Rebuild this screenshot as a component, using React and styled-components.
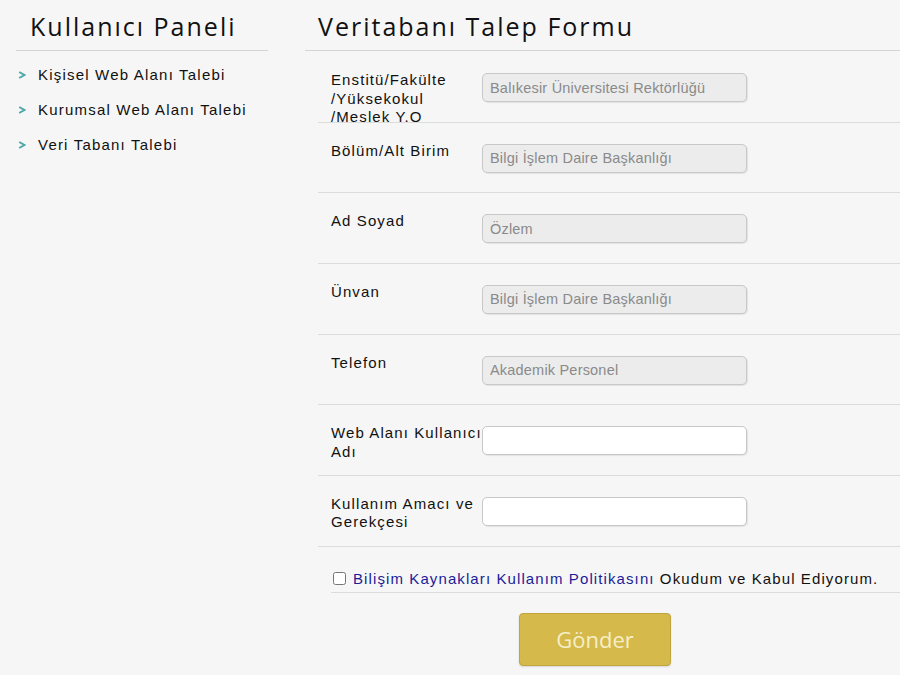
import React from "react";
import styled, { createGlobalStyle } from "styled-components";

const GlobalStyle = createGlobalStyle`
  body {
    margin: 0;
    background: #f6f6f6;
    font-family: "Liberation Sans", Arial, sans-serif;
    color: #111;
  }
`;

const menu = ["Kişisel Web Alanı Talebi", "Kurumsal Web Alanı Talebi", "Veri Tabanı Talebi"];

const fields = [
  { label: ["Enstitü/Fakülte", "/Yüksekokul", "/Meslek Y.O"], value: "Balıkesir Üniversitesi Rektörlüğü" },
  { label: ["Bölüm/Alt Birim"], value: "Bilgi İşlem Daire Başkanlığı" },
  { label: ["Ad Soyad"], value: "Özlem" },
  { label: ["Ünvan"], value: "Bilgi İşlem Daire Başkanlığı" },
  { label: ["Telefon"], value: "Akademik Personel" },
  { label: ["Web Alanı Kullanıcı", "Adı"], value: null },
  { label: ["Kullanım Amacı ve", "Gerekçesi"], value: null },
];

const App = () => {
  return (
    <>
      <GlobalStyle />
      <Page>
        <Sidebar>
          <Heading>Kullanıcı Paneli</Heading>
          <Menu>
            {menu.map((item) => (
              <MenuItem key={item}>
                <Arrow viewBox="0 0 8 8">
                  <path d="M1.2 1 L6.4 4 L1.2 7" fill="none" stroke="#4ea7a9" strokeWidth="2" />
                </Arrow>
                {item}
              </MenuItem>
            ))}
          </Menu>
        </Sidebar>
        <Main>
          <MainHeading>Veritabanı Talep Formu</MainHeading>
          <Form>
            {fields.map((f) => (
              <Row key={f.label[0]}>
                <Label>
                  {f.label.map((l) => (
                    <span key={l}>{l}</span>
                  ))}
                </Label>
                <Input disabled={f.value !== null} defaultValue={f.value || ""} />
              </Row>
            ))}
            <AgreeRow>
              <Check type="checkbox" />
              <AgreeText>
                <Link>Bilişim Kaynakları Kullanım Politikasını</Link> Okudum ve Kabul Ediyorum.
              </AgreeText>
            </AgreeRow>
            <Button type="button">Gönder</Button>
          </Form>
        </Main>
      </Page>
    </>
  );
};

const Page = styled.div`
  display: flex;
  width: 900px;
  height: 675px;
  overflow: hidden;
`;

const Sidebar = styled.div`
  width: 252px;
  margin-left: 16px;
  flex-shrink: 0;
`;

const Heading = styled.h2`
  margin: 0;
  height: 50px;
  padding-left: 14px;
  border-bottom: 1px solid #d4d4d4;
  font-family: "Open Sans", sans-serif;
  font-weight: 400;
  font-size: 25px;
  letter-spacing: 2px;
  line-height: 52px;
  color: #111;
  white-space: nowrap;
`;

const Menu = styled.ul`
  list-style: none;
  margin: 6px 0 0;
  padding: 0;
`;

const MenuItem = styled.li`
  display: flex;
  align-items: center;
  height: 35px;
  padding-left: 2px;
  font-size: 15px;
  letter-spacing: 1.2px;
  color: #111;
`;

const Arrow = styled.svg`
  width: 8px;
  height: 8px;
  margin-right: 12px;
`;

const Main = styled.div`
  flex: 1;
  margin-left: 37px;
`;

const MainHeading = styled(Heading)`
  padding-left: 13px;
`;

const Form = styled.form`
  display: flex;
  flex-direction: column;
  margin: 1px 0 0 13px;
`;

const Row = styled.div`
  display: flex;
  align-items: flex-start;
  box-sizing: border-box;
  height: 70.67px;
  border-bottom: 1px solid #dcdcdc;
  padding: 19px 0 0 13px;
`;

const Label = styled.div`
  display: flex;
  flex-direction: column;
  width: 151px;
  flex-shrink: 0;
  font-size: 15px;
  line-height: 18.5px;
  letter-spacing: 1.1px;
  white-space: nowrap;
  color: #111;
`;

const Input = styled.input`
  box-sizing: border-box;
  width: 265px;
  height: 29px;
  margin-top: 2px;
  padding: 0 7px;
  border: 1px solid #c8c8c8;
  border-radius: 5px;
  background: #fff;
  font-family: "Liberation Sans", Arial, sans-serif;
  font-size: 14.5px;
  letter-spacing: 0.2px;
  color: #8a8a8a;
  box-shadow: 1px 1px 1px rgba(0, 0, 0, 0.08);

  &:disabled {
    background: #ececec;
    color: #8a8a8a;
  }
`;

const AgreeRow = styled.div`
  display: flex;
  align-items: center;
  box-sizing: border-box;
  height: 46px;
  margin-left: 13px;
  padding-top: 18px;
  border-bottom: 1px solid #dcdcdc;
`;

const Check = styled.input`
  width: 13px;
  height: 13px;
  margin: 0 7px 0 2px;
`;

const AgreeText = styled.span`
  font-size: 15px;
  letter-spacing: 1.1px;
  white-space: nowrap;
  color: #111;
`;

const Link = styled.a`
  color: #1c1c99;
  text-decoration: none;
`;

const Button = styled.button`
  align-self: flex-start;
  width: 152px;
  height: 53px;
  margin: 20px 0 0 201px;
  border: 1px solid #c0a43c;
  border-radius: 4px;
  background: #d5b94b;
  font-family: "Open Sans", sans-serif;
  font-size: 22px;
  color: #f5efc8;
  box-shadow: 0 1px 2px rgba(0, 0, 0, 0.12);
`;

export default App;
